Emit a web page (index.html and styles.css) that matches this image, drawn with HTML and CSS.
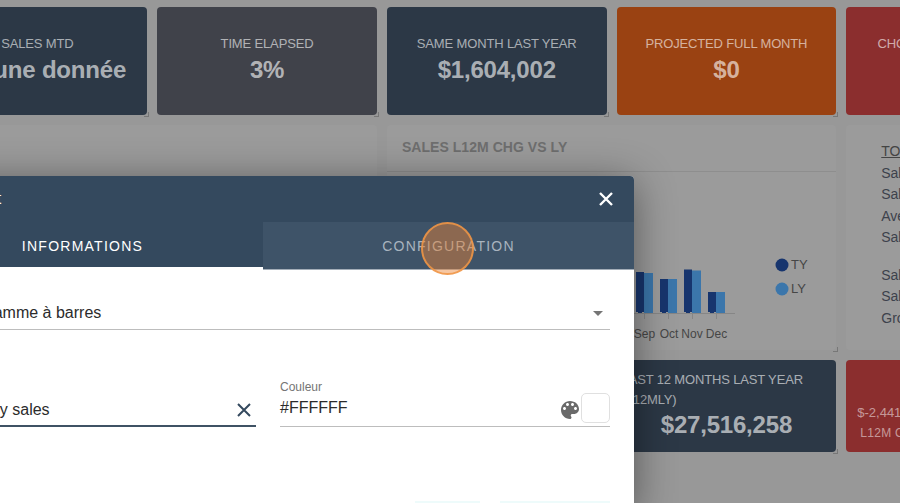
FILE: index.html
```html
<!DOCTYPE html>
<html lang="fr">
<head>
    <meta charset="UTF-8">
    <meta name="viewport" content="width=device-width, initial-scale=1.0">
    <title>Tableau de bord</title>
    <link rel="stylesheet" href="styles.css">
</head>
<body>

<!-- Tableau de bord, assombri derrière la fenêtre -->
<div class="dashboard">
    <div class="card card-navy"><span class="card-title">SALES MTD</span><strong class="card-value">Aucune donnée</strong></div>
    <div class="card card-gray"><span class="card-title">TIME ELAPSED</span><strong class="card-value">3%</strong></div>
    <div class="card card-navy"><span class="card-title">SAME MONTH LAST YEAR</span><strong class="card-value">$1,604,002</strong></div>
    <div class="card card-orange"><span class="card-title">PROJECTED FULL MONTH</span><strong class="card-value">$0</strong></div>
    <div class="card card-red no-handle"><span class="card-title">CHG VS SAME MONTH LY</span></div>

    <div class="panel panel-wide"></div>
    <div class="panel panel-wide">
        <h3 class="panel-title">SALES L12M CHG VS LY</h3>
        <svg class="chart" viewBox="387 172 449 178" aria-hidden="true">
            <g fill="#17356e">
                <path d="M636 272h8v40h-2v2h-4v-2h-2z"/>
                <path d="M660 279h8v33h-2v2h-4v-2h-2z"/>
                <path d="M684 269.500h8v42.500h-2v2h-4v-2h-2z"/>
                <path d="M708 292h8v20h-2v2h-4v-2h-2z"/>
            </g>
            <g fill="#3b76ab">
                <rect x="644" y="273" width="9" height="40"/>
                <rect x="668" y="279" width="9" height="34"/>
                <rect x="692" y="270.500" width="9" height="42.500"/>
                <rect x="716" y="292" width="9" height="21"/>
            </g>
            <path d="M634 313.500H735M644.500 313v6M668.500 313v6M692.500 313v6M716.500 313v6" stroke="#868686" fill="none"/>
            <g class="chart-label" text-anchor="middle">
                <text x="644.500" y="337.500">Sep</text>
                <text x="669" y="337.500">Oct</text>
                <text x="692" y="337.500">Nov</text>
                <text x="716.500" y="337.500">Dec</text>
            </g>
            <circle cx="782" cy="265" r="6.500" fill="#17356e"/>
            <circle cx="782" cy="289" r="6.500" fill="#3b76ab"/>
            <text class="chart-legend" x="791" y="269">TY</text>
            <text class="chart-legend" x="791" y="293">LY</text>
        </svg>
    </div>
    <div class="panel panel-totals no-handle">
        <ul class="totals">
            <li class="totals-head">TOTALS</li>
            <li>Sales TY</li>
            <li>Sales LY</li>
            <li>Average</li>
            <li>Sales MTD</li>
        </ul>
        <ul class="totals">
            <li>Sales L12M</li>
            <li>Sales L12MLY</li>
            <li>Growth</li>
        </ul>
    </div>

    <div class="card card-navy card-left card-l12">
        <span class="card-title">LAST 12 MONTHS LAST YEAR (L12MLY)</span>
        <strong class="card-value">$27,516,258</strong>
    </div>
    <div class="card card-red card-small no-handle">
        <span class="small-value">$-2,441,256</span>
        <span class="small-label">L12M CHG</span>
    </div>
</div>

<!-- Fenêtre de configuration -->
<div class="modal">
    <div class="modal-header">
        <span class="modal-title">Ajout widget</span>
        <svg class="icon-close" viewBox="0 0 16 16" aria-hidden="true"><path d="M2 2L14 14M14 2L2 14"/></svg>
    </div>
    <div class="tabs">
        <div class="tab tab-active">INFORMATIONS</div>
        <div class="tab">CONFIGURATION</div>
    </div>
    <div class="modal-body">
        <div class="field field-select">
            <span class="select-text">Histogramme à barres</span>
            <span class="select-arrow"></span>
        </div>
        <div class="field-row">
            <div class="field field-name">
                <span class="name-text">My monthly sales</span>
                <svg class="icon-clear" viewBox="0 0 16 16" aria-hidden="true"><path d="M2 2L14 14M14 2L2 14"/></svg>
            </div>
            <div class="field field-color">
                <label class="field-label">Couleur</label>
                <div class="color-row">
                    <span class="color-text">#FFFFFF</span>
                    <svg class="icon-palette" viewBox="0 0 24 24" aria-hidden="true"><path d="M12 3c-4.970 0-9 4.030-9 9s4.030 9 9 9c.830 0 1.500-.670 1.500-1.500 0-.390-.150-.740-.390-1.010-.230-.260-.380-.610-.380-.990 0-.830.670-1.500 1.500-1.500H16c2.760 0 5-2.240 5-5 0-4.420-4.030-8-9-8zm-5.500 9c-.830 0-1.500-.670-1.500-1.500S5.670 9 6.500 9 8 9.670 8 10.500 7.330 12 6.500 12zm3-4C8.670 8 8 7.330 8 6.500S8.670 5 9.500 5s1.500.670 1.500 1.500S10.330 8 9.500 8zm5 0c-.830 0-1.500-.670-1.500-1.500S13.670 5 14.500 5s1.500.670 1.500 1.500S15.330 8 14.500 8zm3 4c-.830 0-1.500-.670-1.500-1.500S16.670 9 17.500 9s1.500.670 1.500 1.500-.670 1.500-1.500 1.500z"/></svg>
                    <span class="swatch"></span>
                </div>
            </div>
        </div>
        <div class="modal-footer">
            <span class="footer-btn footer-btn-small"></span>
            <span class="footer-btn footer-btn-large"></span>
        </div>
    </div>
    <span class="click-dot"></span>
</div>

</body>
</html>
```

FILE: styles.css
```css
/* Estilos generales */
html, body {
    height: 100%;
}
body {
    margin: 0;
    position: relative;
    overflow: hidden;
    background-color: #989898;
    font-family: "Liberation Sans", Arial, sans-serif;
}

/* Grille du tableau de bord */
.dashboard {
    display: grid;
    grid-template-columns: repeat(5, 219.7px);
    grid-template-rows: 108px 225px 92px;
    gap: 10px;
    padding-top: 7px;
    margin-left: -72.5px;
    width: 1200px;
}

/* Cartes */
.card {
    position: relative;
    display: flex;
    flex-direction: column;
    align-items: center;
    padding-top: 28px;
    box-sizing: border-box;
    border-radius: 4px;
    color: rgba(255, 255, 255, 0.6);
}
.card-navy { background-color: #2c3846; }
.card-gray { background-color: #40424a; }
.card-orange { background-color: #9a4212; }
.card-red { background-color: #8b2e2e; }
.card-title {
    font-size: 13px;
    line-height: 17px;
    letter-spacing: -0.15px;
}
.card-value {
    margin-top: 3px;
    font-size: 24px;
    line-height: 30px;
    font-weight: bold;
    letter-spacing: -0.2px;
    color: rgba(255, 255, 255, 0.62);
}

/* Poignée de redimensionnement */
.card::after, .panel::after {
    content: "";
    position: absolute;
    right: -2px;
    bottom: -2px;
    width: 4px;
    height: 4px;
    border-right: 1px solid #777;
    border-bottom: 1px solid #777;
}
.no-handle::after {
    display: none;
}

/* Panneaux */
.panel {
    position: relative;
    background-color: #9b9b9b;
    border-radius: 4px;
    box-sizing: border-box;
}
.panel-wide {
    grid-column: span 2;
    display: flex;
    flex-direction: column;
}
.panel-title {
    margin: 0;
    height: 47px;
    padding: 14px 15px 0;
    box-sizing: border-box;
    border-bottom: 1px solid #8e8e8e;
    font-size: 14px;
    line-height: 17px;
    letter-spacing: 0.05px;
    color: #6e6e6e;
}
.chart {
    display: block;
    width: 449px;
    height: 178px;
}
.chart-label {
    font-size: 12px;
    fill: #464646;
}
.chart-legend {
    font-size: 13px;
    fill: #464646;
}

/* Totaux */
.panel-totals {
    padding: 16px 0 0 35px;
}
.totals {
    list-style: none;
    margin: 0 0 16px;
    padding: 0;
    font-size: 14px;
    line-height: 21.500px;
    color: #3d424c;
}
.totals-head {
    text-decoration: underline;
    color: #444;
}

/* Dernière rangée */
.card-l12 {
    grid-column: 4;
    padding: 10px 5px 0;
}
.card-left .card-title {
    align-self: stretch;
    line-height: 20px;
}
.card-left .card-value {
    margin-top: 0;
}
.card-small {
    align-items: flex-start;
    padding: 43px 0 0 11px;
    color: rgba(255, 255, 255, 0.52);
}
.small-value {
    font-size: 13px;
    line-height: 20px;
}
.small-label {
    margin: 1px 0 0 3px;
    font-size: 12px;
    line-height: 18px;
    letter-spacing: 0.3px;
}

/* Fenêtre */
.modal {
    position: absolute;
    left: -98px;
    top: 176px;
    width: 732px;
    background-color: #fff;
    border-radius: 4px 4px 0 0;
    box-shadow: 0 6px 40px rgba(0, 0, 0, 0.45);
}
.modal-header {
    display: flex;
    justify-content: space-between;
    align-items: center;
    height: 46px;
    padding: 0 20px 0 12px;
    box-sizing: border-box;
    background-color: #34495e;
    border-radius: 4px 4px 0 0;
}
.modal-title {
    font-size: 16px;
    color: #fff;
}
.icon-close {
    width: 16px;
    height: 16px;
    fill: none;
    stroke: #fff;
    stroke-width: 2.400;
}
.tabs {
    display: flex;
    height: 48px;
}
.tab {
    flex: 1;
    display: flex;
    align-items: center;
    justify-content: center;
    box-sizing: border-box;
    padding-top: 1px;
    background-color: #3e5368;
    border-bottom: 1px solid #a3adb8;
    font-size: 14px;
    letter-spacing: 1.250px;
    color: #a9b4bf;
}
.tab + .tab {
    flex: 0 0 371px;
}
.tab-active {
    background-color: #34495e;
    border-bottom: 3px solid #fff;
    color: #fff;
    padding-top: 3px;
}

/* Formulaire */
.modal-body {
    padding: 31px 24px 0;
    height: 240px;
    box-sizing: border-box;
    color: #2b2b2b;
    font-size: 16px;
}
.field {
    box-sizing: border-box;
    border-bottom: 1px solid #bdbdbd;
}
.field-select {
    display: flex;
    justify-content: space-between;
    align-items: center;
    height: 29px;
    padding-bottom: 4px;
    padding-right: 7px;
}
.select-text {
    padding-left: 17px;
}
.select-arrow {
    width: 0;
    height: 0;
    border-left: 5px solid transparent;
    border-right: 5px solid transparent;
    border-top: 5px solid #757575;
}
.field-row {
    display: grid;
    grid-template-columns: 1fr 1fr;
    align-items: end;
    gap: 24px;
    margin-top: 50px;
}
.field-name {
    display: flex;
    justify-content: space-between;
    align-items: center;
    height: 47px;
    padding: 14px 4px 0 0;
    border-bottom: 2px solid #3f5264;
}
.name-text {
    white-space: nowrap;
}
.icon-clear {
    width: 16px;
    height: 16px;
    fill: none;
    stroke: #34495e;
    stroke-width: 2;
}
.field-label {
    display: block;
    font-size: 12px;
    line-height: 14px;
    color: #757575;
}
.color-row {
    display: flex;
    align-items: center;
    height: 32px;
}
.color-text {
    flex: 1;
    padding-bottom: 5px;
}
.icon-palette {
    width: 24px;
    height: 24px;
    margin-right: -1px;
    fill: #6a6a6a;
}
.swatch {
    width: 29px;
    height: 30px;
    margin-top: -4px;
    box-sizing: border-box;
    background-color: #fff;
    border: 1px solid #e0e0e0;
    border-radius: 5px;
}
.modal-footer {
    display: flex;
    justify-content: flex-end;
    gap: 20px;
    margin-top: 74px;
}
.footer-btn {
    height: 36px;
    background-color: #eefbfb;
}
.footer-btn-small {
    width: 65px;
}
.footer-btn-large {
    width: 110px;
}

/* Marqueur de clic */
.click-dot {
    position: absolute;
    left: 519px;
    top: 46px;
    width: 53px;
    height: 53px;
    box-sizing: border-box;
    border: 2px solid rgba(240, 150, 70, 0.85);
    border-radius: 50%;
    background-color: rgba(235, 130, 50, 0.45);
}
```
